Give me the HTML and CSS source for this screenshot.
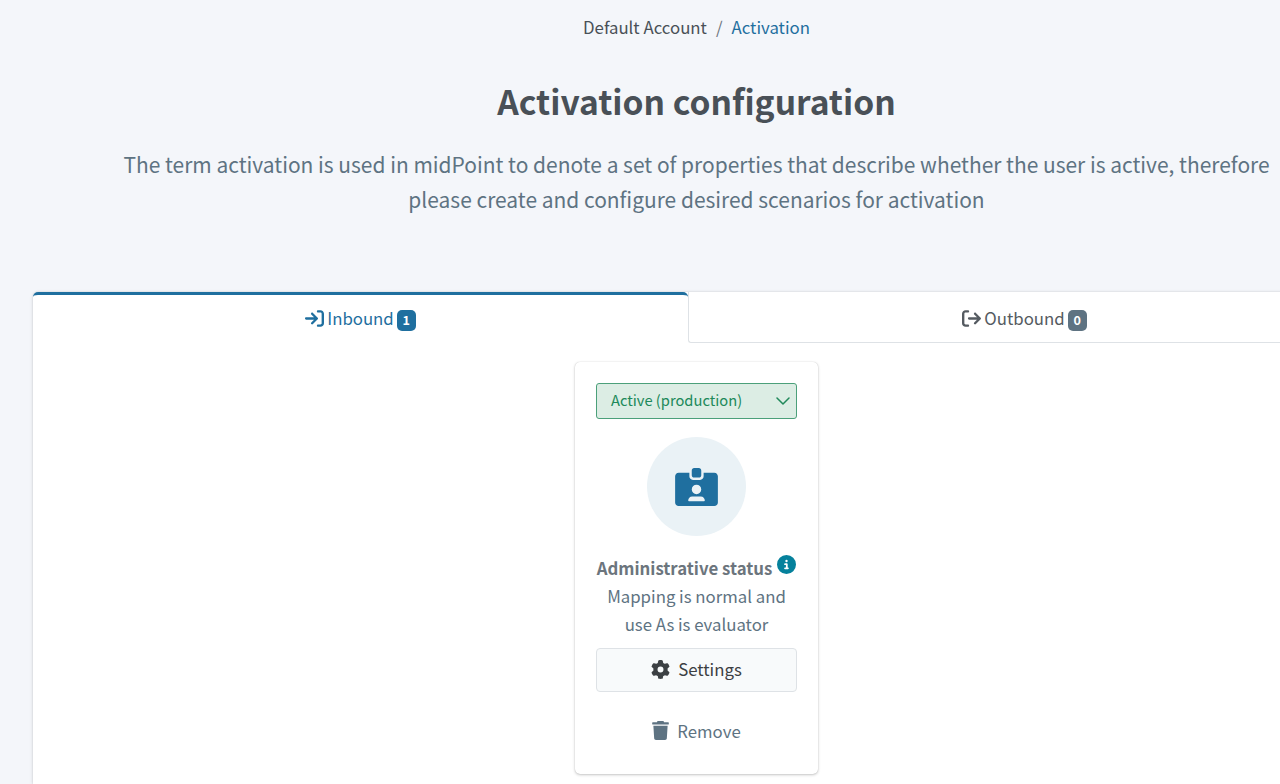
FILE: index.html
```
<!DOCTYPE html>
<html lang="en">
<head>
    <meta charset="utf-8">
    <title>Activation configuration</title>
    <link rel="stylesheet" href="styles.css">
</head>
<body>
    <div class="page">
        <nav class="breadcrumb">
            <span>Default Account</span>
            <span class="separator">/</span>
            <a href="#">Activation</a>
        </nav>

        <h1>Activation configuration</h1>
        <p class="lead">The term activation is used in midPoint to denote a set of properties that describe whether the user is active, therefore<br>please create and configure desired scenarios for activation</p>

        <div class="panel">
            <div class="tabs">
                <a class="tab active" href="#">
                    <svg class="icon" viewBox="0 0 512 512"><path d="M352 96l64 0c17.7 0 32 14.3 32 32l0 256c0 17.7-14.3 32-32 32l-64 0c-17.7 0-32 14.3-32 32s14.3 32 32 32l64 0c53 0 96-43 96-96l0-256c0-53-43-96-96-96l-64 0c-17.7 0-32 14.3-32 32s14.3 32 32 32zm-9.4 182.6c12.5-12.5 12.5-32.8 0-45.3l-128-128c-12.5-12.5-32.8-12.5-45.3 0s-12.5 32.8 0 45.3L242.7 224 32 224c-17.7 0-32 14.3-32 32s14.3 32 32 32l210.7 0-73.4 73.4c-12.5 12.5-12.5 32.8 0 45.3s32.8 12.5 45.3 0l128-128z"/></svg>
                    <span class="tab-label">Inbound</span>
                    <span class="badge">1</span>
                </a>
                <a class="tab" href="#">
                    <svg class="icon" viewBox="0 0 512 512"><path d="M502.6 278.6c12.5-12.5 12.5-32.8 0-45.3l-128-128c-12.5-12.5-32.8-12.5-45.3 0s-12.5 32.8 0 45.3L402.7 224 192 224c-17.7 0-32 14.3-32 32s14.3 32 32 32l210.7 0-73.4 73.4c-12.5 12.5-12.5 32.8 0 45.3s32.8 12.5 45.3 0l128-128zM160 96c17.7 0 32-14.3 32-32s-14.3-32-32-32L96 32C43 32 0 75 0 128L0 384c0 53 43 96 96 96l64 0c17.7 0 32-14.3 32-32s-14.3-32-32-32l-64 0c-17.7 0-32-14.3-32-32l0-256c0-17.7 14.3-32 32-32l64 0z"/></svg>
                    <span class="tab-label">Outbound</span>
                    <span class="badge">0</span>
                </a>
            </div>

            <div class="card">
                <button type="button" class="state">
                    <span class="state-label">Active (production)</span>
                    <svg class="chevron" viewBox="0 0 14 8"><path d="M1 1l6 6 6-6"/></svg>
                </button>
                <div class="circle">
                    <svg class="icon-card" viewBox="0 0 576 512"><path d="M256 0l64 0c17.7 0 32 14.3 32 32l0 64c0 17.7-14.3 32-32 32l-64 0c-17.7 0-32-14.3-32-32l0-64c0-17.7 14.3-32 32-32zM48 64l144 0 0 48c0 26.5 21.5 48 48 48l96 0c26.5 0 48-21.5 48-48l0-48 144 0c26.5 0 48 21.5 48 48l0 352c0 26.5-21.5 48-48 48L48 512c-26.5 0-48-21.5-48-48L0 112C0 85.5 21.5 64 48 64zM176 437.3c0 5.9 4.8 10.7 10.7 10.7l202.7 0c5.9 0 10.7-4.8 10.7-10.7c0-29.5-23.9-53.3-53.3-53.3l-117.3 0c-29.5 0-53.3 23.9-53.3 53.3zM288 352a64 64 0 1 0 0-128 64 64 0 1 0 0 128z"/></svg>
                </div>
                <div class="card-title">
                    <b>Administrative status</b>
                    <svg class="icon-info" viewBox="0 0 512 512"><path d="M256 512A256 256 0 1 0 256 0a256 256 0 1 0 0 512zM216 336l24 0 0-64-24 0c-13.3 0-24-10.7-24-24s10.7-24 24-24l48 0c13.3 0 24 10.7 24 24l0 88 8 0c13.3 0 24 10.7 24 24s-10.7 24-24 24l-80 0c-13.3 0-24-10.7-24-24s10.7-24 24-24zm40-208a32 32 0 1 1 0 64 32 32 0 1 1 0-64z"/></svg>
                </div>
                <div class="card-text">Mapping is normal and<br>use As is evaluator</div>
                <button type="button" class="btn btn-settings">
                    <svg class="icon" viewBox="0 0 512 512"><path d="M495.9 166.6c3.2 8.7 .5 18.4-6.4 24.6l-43.3 39.4c1.1 8.3 1.7 16.8 1.7 25.4s-.6 17.1-1.7 25.4l43.3 39.4c6.9 6.2 9.6 15.9 6.4 24.6c-4.4 11.9-9.7 23.3-15.8 34.3l-4.7 8.1c-6.6 11-14 21.4-22.1 31.2c-5.9 7.2-15.7 9.6-24.5 6.8l-55.7-17.7c-13.4 10.3-28.2 18.9-44 25.4l-12.5 57.1c-2 9.1-9 16.3-18.2 17.8c-13.8 2.3-28 3.5-42.5 3.5s-28.7-1.2-42.5-3.5c-9.2-1.5-16.2-8.7-18.2-17.8l-12.5-57.1c-15.8-6.5-30.6-15.1-44-25.4L83.1 425.9c-8.8 2.8-18.6 .3-24.5-6.8c-8.1-9.8-15.5-20.2-22.1-31.2l-4.7-8.1c-6.1-11-11.4-22.4-15.8-34.3c-3.2-8.7-.5-18.4 6.4-24.6l43.3-39.4C64.6 273.1 64 264.6 64 256s.6-17.1 1.7-25.4L22.4 191.2c-6.9-6.2-9.6-15.9-6.4-24.6c4.4-11.9 9.7-23.3 15.8-34.3l4.7-8.1c6.6-11 14-21.4 22.1-31.2c5.9-7.2 15.7-9.6 24.5-6.8l55.7 17.7c13.4-10.3 28.2-18.9 44-25.4l12.5-57.1c2-9.1 9-16.3 18.2-17.8C227.3 1.2 241.5 0 256 0s28.7 1.2 42.5 3.5c9.2 1.5 16.2 8.7 18.2 17.8l12.5 57.1c15.8 6.5 30.6 15.1 44 25.4l55.7-17.7c8.8-2.8 18.6-.3 24.5 6.8c8.1 9.8 15.5 20.2 22.1 31.2l4.7 8.1c6.1 11 11.4 22.4 15.8 34.3zM256 336a80 80 0 1 0 0-160 80 80 0 1 0 0 160z"/></svg>
                    <span>Settings</span>
                </button>
                <button type="button" class="btn btn-remove">
                    <svg class="icon icon-trash" viewBox="0 0 448 512"><path d="M53.2 467c1.6 24.8 23 45 47.9 45h245.8c24.9 0 46.3-20.2 47.9-45L416 128H32L53.2 467zM432 32H320l-11.6-23.2C305.7 3.4 300.2 0 294.1 0H153.9c-6.1 0-11.6 3.4-14.3 8.8L128 32H16C7.2 32 0 39.2 0 48v32c0 8.8 7.2 16 16 16h416c8.8 0 16-7.2 16-16V48c0-8.8-7.2-16-16-16z"/></svg>
                    <span>Remove</span>
                </button>
            </div>
        </div>
    </div>
</body>
</html>
```
FILE: styles.css
```
* {
    box-sizing: border-box;
}
body {
    margin: 0;
    height: 784px;
    overflow: hidden;
    background: #f4f6fa;
    font-family: "Noto Sans CJK SC", "Open Sans", sans-serif;
    font-size: 16.8px;
    line-height: 28px;
    color: #5e7382;
}
a {
    color: #1f6f9f;
    text-decoration: none;
}
svg {
    fill: currentColor;
    flex: none;
}
.page {
    width: 1393px;
    height: 784px;
    display: flex;
    flex-direction: column;
    padding: 13px 33px 0;
}
.breadcrumb {
    display: flex;
    justify-content: center;
    gap: 9px;
    color: #495057;
}
.breadcrumb .separator {
    color: #6c757d;
}
h1 {
    margin: 36px 0 0;
    font-size: 33.6px;
    line-height: 48px;
    text-align: center;
    color: #495057;
}
.lead {
    margin: 22px -20px 0;
    font-size: 20.96px;
    line-height: 35px;
    text-align: center;
    white-space: nowrap;
}
.panel {
    flex: 1;
    margin-top: 75px;
    background: white;
    border-radius: 5px 5px 0 0;
    box-shadow: 0 0 2px rgba(0, 0, 0, 0.15), 0 1px 4px rgba(0, 0, 0, 0.1);
}
.tabs {
    display: flex;
    height: 51px;
}
.tab {
    flex: 1;
    display: flex;
    align-items: center;
    justify-content: center;
    border-left: 1px solid #dee2e6;
    border-bottom: 1px solid #dee2e6;
    border-radius: 0 0 0 3px;
    padding-top: 3px;
    color: #555b61;
}
.tab.active {
    flex: none;
    width: 655px;
    border: none;
    border-top: 3px solid #1f6f9f;
    border-radius: 5px 5px 0 0;
    padding-top: 0;
    padding-bottom: 1px;
    color: #1f6f9f;
}
.icon {
    width: 19px;
    height: 19px;
}
.tab .icon {
    margin-bottom: 1px;
}
.tab-label {
    margin: 0 3px;
    padding-bottom: 2px;
}
.badge {
    width: 19px;
    height: 21px;
    margin-top: 4px;
    border-radius: 5px;
    background: #5e7382;
    color: white;
    font-size: 12.6px;
    font-weight: bold;
    line-height: 20px;
    text-align: center;
}
.active .badge {
    background: #1f6f9f;
}
.card {
    width: 243px;
    height: 412px;
    margin: 19px auto 0;
    padding: 21px;
    display: flex;
    flex-direction: column;
    align-items: center;
    border-radius: 5px;
    box-shadow: 0 0 1px rgba(0, 0, 0, 0.2), 0 1px 3px rgba(0, 0, 0, 0.22);
}
button {
    font-family: inherit;
    cursor: pointer;
}
.state {
    width: 201px;
    height: 36px;
    display: flex;
    align-items: center;
    justify-content: space-between;
    padding: 0 6px 0 14px;
    border: 1px solid #4ba07a;
    border-radius: 3px;
    background: #dcede4;
    color: #20895a;
    font-size: 14.7px;
}
.state-label {
    padding-bottom: 3px;
}
.chevron {
    width: 14px;
    height: 8px;
    fill: none;
    stroke: currentColor;
    stroke-width: 1.5;
    stroke-linecap: round;
    stroke-linejoin: round;
}
.circle {
    width: 99px;
    height: 99px;
    margin-top: 18px;
    display: flex;
    align-items: center;
    justify-content: center;
    border-radius: 50%;
    background: #eaf2f6;
    color: #1f6f9f;
}
.icon-card {
    width: 43px;
    height: 38px;
}
.card-title {
    display: flex;
    gap: 5px;
    margin-top: 18px;
    color: #6c757d;
    white-space: nowrap;
}
.icon-info {
    width: 19px;
    height: 19px;
    margin-top: 1px;
    color: #05819c;
}
.card-text {
    text-align: center;
    white-space: nowrap;
}
.btn {
    width: 201px;
    height: 44px;
    display: flex;
    align-items: center;
    justify-content: center;
    gap: 8px;
    padding: 0;
    border: 1px solid transparent;
    border-radius: 4px;
    background: none;
    font-size: 16.8px;
}
.btn-settings {
    margin-top: 10px;
    padding-bottom: 2px;
    border-color: #dee2e6;
    background: #f8fafb;
    color: #3c4043;
}
.btn-remove {
    margin-top: 17px;
    color: #5e7382;
}
.icon-trash {
    width: 17px;
    margin-bottom: 1px;
}
```
